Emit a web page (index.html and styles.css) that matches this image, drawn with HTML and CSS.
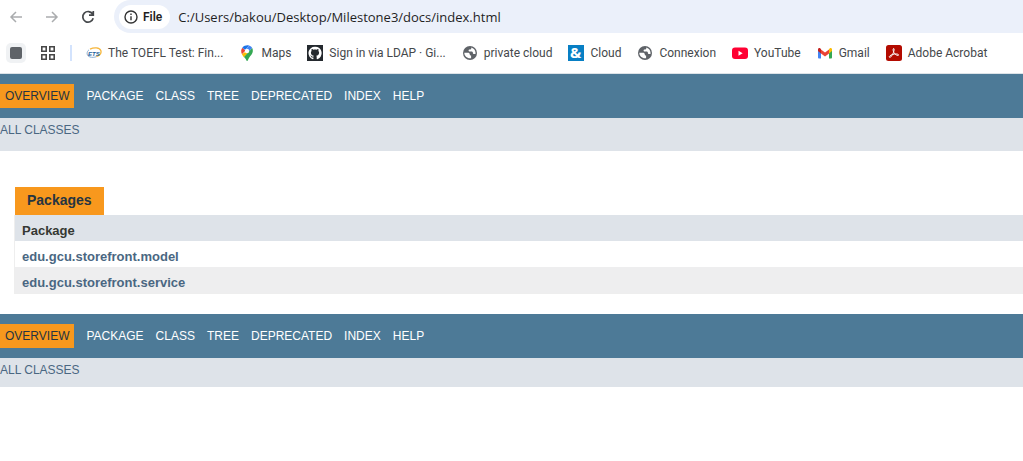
FILE: index.html
```html
<!DOCTYPE html>
<html lang="en">
<head>
<meta charset="utf-8">
<title>Overview</title>
<link rel="stylesheet" href="styles.css">
</head>
<body>
<svg class="sprite" aria-hidden="true">
  <symbol id="globe" viewBox="0 0 16 16">
    <circle cx="8" cy="8" r="7" fill="#5f6368"/>
    <path d="M2.300 7.800h3.500c1.300 0 2 .6 2 1.600 0 .7.500 1 1.300 1v2.800c-3.700.6-6.800-1.900-6.800-5.400z" fill="#fff"/>
    <path d="M9.300 2.500v.8c0 .8-.7 1.200-1.600 1.200-.7 0-1.100.4-1.100 1 0 .7.500 1 1.100 1h1.700c1 0 1.500.6 1.500 1.400 0 .7.500 1 1.200 1h1.400c.4-3-1.500-5.600-4.200-6.400z" fill="#fff"/>
  </symbol>
</svg>

<header class="browser">
  <div class="toolbar">
    <div class="controls">
      <button class="tool" aria-label="Back"><svg viewBox="0 0 16 16"><path d="M14 8H3M8 3L3 8l5 5" fill="none" stroke="#aaacae" stroke-width="1.500"/></svg></button>
      <button class="tool" aria-label="Forward"><svg viewBox="0 0 16 16"><path d="M2 8h11M8 3l5 5-5 5" fill="none" stroke="#aaacae" stroke-width="1.500"/></svg></button>
      <button class="tool" aria-label="Reload"><svg viewBox="0 0 16 16"><path d="M12.600 5A5.300 5.300 0 1 0 13.200 9.300M13.300 2v4.200H9" fill="none" stroke="#45484b" stroke-width="1.700"/></svg></button>
    </div>
    <div class="address">
      <button class="origin"><svg viewBox="0 0 14 14"><circle cx="7" cy="7" r="6" fill="none" stroke="#333" stroke-width="1.400"/><path d="M7 6.200v4M7 3.500v1.500" stroke="#333" stroke-width="1.400"/></svg>File</button>
      <input class="url" aria-label="Address" value="C:/Users/bakou/Desktop/Milestone3/docs/index.html">
    </div>
  </div>

  <nav class="bookmarks" aria-label="Bookmarks">
    <button class="group" aria-label="Tab group"><span class="square"></span></button>
    <button class="apps" aria-label="Apps"><svg viewBox="0 0 16 16"><path d="M1.800 1.800h4.400v4.400H1.800zM9.800 1.800h4.400v4.400H9.800zM1.800 9.800h4.400v4.400H1.800zM9.800 9.800h4.400v4.400H9.800z" fill="none" stroke="#474747" stroke-width="1.600"/></svg></button>
    <span class="divider"></span>
    <div class="links">
      <a class="bookmark" href="#"><svg viewBox="0 0 16 16"><path d="M4 4.200C8 2.200 13.500 2.500 14.800 5.500c.8 2.500-1.200 5-4.500 6.200" fill="none" stroke="#f6b63c" stroke-width="1.300"/><path d="M3 4.800C.2 6.800.5 11 4 12c2 .6 4.500.4 6.300-.3" fill="none" stroke="#88aed3" stroke-width="1"/><text class="ets" x="2" y="10.500">ETS</text></svg>The TOEFL Test: Fin...</a>
      <a class="bookmark" href="#"><svg viewBox="0 0 16 16"><path d="M3.300 2.800L6.500 5.400 3 9.200C1.800 7 1.900 4.500 3.300 2.800z" fill="#ea4335"/><path d="M3.300 2.800C5 .4 8 0 10 .5L6.300 5z" fill="#1a73e8"/><path d="M10 .5c1.500.4 2.700 1.400 3.200 2.600L9.600 7 6.500 5z" fill="#4285f4"/><path d="M6.200 7l3.700.3-5 5C4.200 11.200 3.400 10.200 2.900 9.300z" fill="#fbbc04"/><path d="M13.200 3.100c1.100 2.300.7 4.600-.8 6.600C10.500 12 9.500 13.500 8.900 15.300c-.3.9-1.300.9-1.600 0-.5-1.500-1.300-2.400-2.300-3.300z" fill="#34a853"/><circle cx="8" cy="6" r="2.200" fill="#fff"/></svg>Maps</a>
      <a class="bookmark" href="#"><svg viewBox="0 0 16 16"><path d="M0 0h16v16H0z" fill="#24292e"/><path d="M8 1.700a6.400 6.400 0 0 0-2.100 12.500c.4.100.5-.2.500-.4v-1.300c-1.800.4-2.200-.8-2.200-.8-.3-.7-.7-.9-.7-.9-.6-.4 0-.4 0-.4.700 0 1 .7 1 .7.600 1 1.500.7 1.900.6 0-.4.200-.7.400-.9-1.400-.2-2.900-.7-2.900-3.200 0-.7.200-1.300.7-1.700-.1-.2-.3-.9.1-1.800 0 0 .5-.2 1.700.7 1-.3 2.200-.3 3.200 0 1.200-.9 1.700-.7 1.700-.7.400.9.200 1.600.1 1.800.4.400.7 1 .7 1.700 0 2.500-1.500 3-2.900 3.200.3.200.5.600.5 1.200v1.800c0 .2.100.5.500.4A6.400 6.400 0 0 0 8 1.700z" fill="#fff"/></svg>Sign in via LDAP · Gi...</a>
      <a class="bookmark" href="#"><svg><use href="#globe"/></svg>private cloud</a>
      <a class="bookmark" href="#"><svg viewBox="0 0 16 16"><path d="M0 0h16v16H0z" fill="#087fc4"/><text class="ampersand" x="2" y="13">&amp;</text></svg>Cloud</a>
      <a class="bookmark" href="#"><svg><use href="#globe"/></svg>Connexion</a>
      <a class="bookmark" href="#"><svg viewBox="0 0 16 16"><rect y="2.500" width="16" height="11.500" rx="3" fill="#ff0033"/><path d="M6.500 5.800v5l4.200-2.500z" fill="#fff"/></svg>YouTube</a>
      <a class="bookmark" href="#"><svg viewBox="0 0 16 16"><path d="M1 4v8.500c0 .5.500 1 1 1h2V6.300z" fill="#4285f4"/><path d="M15 4v8.500c0 .5-.5 1-1 1h-2V6.300z" fill="#34a853"/><path d="M4 4.500l4 3 4-3v4l-4 3-4-3z" fill="#ea4335"/><path d="M12 4l.7-.6c1-.7 2.300-.1 2.300 1.100V6l-3 2.500z" fill="#fbbc04"/><path d="M4 4l-.7-.6C2.300 2.700 1 3.300 1 4.500V6l3 2.500z" fill="#c5221f"/></svg>Gmail</a>
      <a class="bookmark" href="#"><svg viewBox="0 0 16 16"><rect width="16" height="16" rx="2.500" fill="#b30b00"/><path d="M3.500 12.300c-.9-.8 1-2.200 3-2.800C9.500 8.500 12.800 8.900 12.600 10c-.2 1-2.600.2-4-1.400C7 6.800 6.700 3.600 7.600 3.500c1.100 0 .5 3-1.100 6-1.200 2.200-2.400 3.300-3 2.800z" fill="none" stroke="#fff" stroke-width="1"/></svg>Adobe Acrobat</a>
    </div>
  </nav>
</header>

<nav aria-label="Top navigation">
  <ul class="navbar">
    <li class="current">Overview</li>
    <li>Package</li>
    <li>Class</li>
    <li>Tree</li>
    <li><a href="#">Deprecated</a></li>
    <li><a href="#">Index</a></li>
    <li><a href="#">Help</a></li>
  </ul>
  <div class="subnav subnav-top"><a href="#">All Classes</a></div>
</nav>

<main class="content">
  <table class="overview">
    <caption><span>Packages</span></caption>
    <thead><tr><th scope="col">Package</th></tr></thead>
    <tbody>
      <tr><th scope="row"><a href="#">edu.gcu.storefront.model</a></th></tr>
      <tr><th scope="row"><a href="#">edu.gcu.storefront.service</a></th></tr>
    </tbody>
  </table>
</main>

<nav aria-label="Bottom navigation">
  <ul class="navbar">
    <li class="current">Overview</li>
    <li>Package</li>
    <li>Class</li>
    <li>Tree</li>
    <li><a href="#">Deprecated</a></li>
    <li><a href="#">Index</a></li>
    <li><a href="#">Help</a></li>
  </ul>
  <div class="subnav"><a href="#">All Classes</a></div>
</nav>
</body>
</html>
```
FILE: styles.css
```css
* { box-sizing: border-box; }

body {
  margin: 0;
  background: #fff;
  color: #353833;
  font-family: "Liberation Sans", Arial, sans-serif;
  font-size: 13px;
}

button, input {
  margin: 0;
  padding: 0;
  border: 0;
  background: none;
  font: inherit;
  color: inherit;
}

a { color: inherit; text-decoration: none; }

.sprite { display: none; }

.browser {
  border-bottom: 1px solid #dde3e8;
  font-family: Roboto, "Open Sans", sans-serif;
  font-size: 12px;
  color: #45484b;
}

.toolbar { display: flex; }

.controls {
  display: flex;
  align-items: center;
  gap: 20px;
  padding: 0 18px 0 8px;
}

.tool svg, .apps svg, .bookmark svg {
  display: block;
  width: 16px;
  height: 16px;
  flex: none;
}

.address {
  display: flex;
  flex: 1;
  align-items: center;
  gap: 8px;
  height: 33px;
  padding-left: 5px;
  background: #ebf0fa;
  border-radius: 17px 0 0 17px;
}

.origin {
  display: flex;
  align-items: center;
  gap: 5px;
  height: 24px;
  padding: 0 8px 0 5px;
  border-radius: 12px;
  background: #fff;
  color: #1f1f1f;
  font-weight: 600;
}

.origin svg { width: 14px; height: 14px; }

.url {
  flex: 1;
  font-family: "Open Sans", "Noto Sans", sans-serif;
  font-size: 13px;
  color: #1f1f1f;
}

.bookmarks {
  display: flex;
  align-items: center;
  height: 40px;
  padding-left: 6px;
}

.group {
  display: grid;
  place-items: center;
  width: 20px;
  height: 20px;
  border-radius: 5px;
  background: #f0f2f4;
}

.square {
  width: 12px;
  height: 12px;
  border-radius: 2px;
  background: #5f6368;
}

.apps { margin: 0 14px; }

.divider {
  width: 2px;
  height: 16px;
  background: #d3e3fd;
}

.links {
  display: flex;
  gap: 16px;
  margin-left: 14px;
}

.bookmark {
  display: flex;
  align-items: center;
  gap: 6px;
  white-space: nowrap;
}

.ets {
  font: italic bold 6px "Liberation Sans", sans-serif;
  fill: #245f9e;
}

.ampersand {
  font: bold 15px "Open Sans", sans-serif;
  fill: #fff;
}

.navbar {
  display: flex;
  align-items: flex-start;
  gap: 12px;
  height: 44px;
  margin: 0;
  padding: 10px 0;
  list-style: none;
  background: #4d7a97;
  color: #fff;
  font-size: 12px;
  line-height: 14px;
  text-transform: uppercase;
}

.navbar li { padding: 5px 0; }

.navbar .current {
  padding: 5px;
  background: #f8981d;
  color: #253441;
}

.subnav {
  padding: 5px 0 9px;
  background: #dee3e9;
  color: #4a6782;
  font-size: 12px;
  line-height: 15px;
  text-transform: uppercase;
}

.subnav-top { padding-bottom: 13px; }

.content { padding: 36px 0 20px 14px; }

.overview {
  width: 100%;
  border-spacing: 0;
  border-bottom: 1px solid #eee;
  border-left: 1px solid #eee;
  line-height: 15px;
}

.overview caption {
  padding-left: 1px;
  text-align: left;
  color: #253441;
  font-size: 14px;
  font-weight: bold;
}

.overview caption span {
  display: inline-block;
  padding: 6px 12px 7px;
  background: #f8981d;
}

.overview th {
  padding: 8px 7px 3px;
  text-align: left;
}

.overview thead { background: #dee3e9; }
.overview tbody { color: #4a6782; }
.overview tbody tr:nth-child(even) { background: #eeeeef; }
```
